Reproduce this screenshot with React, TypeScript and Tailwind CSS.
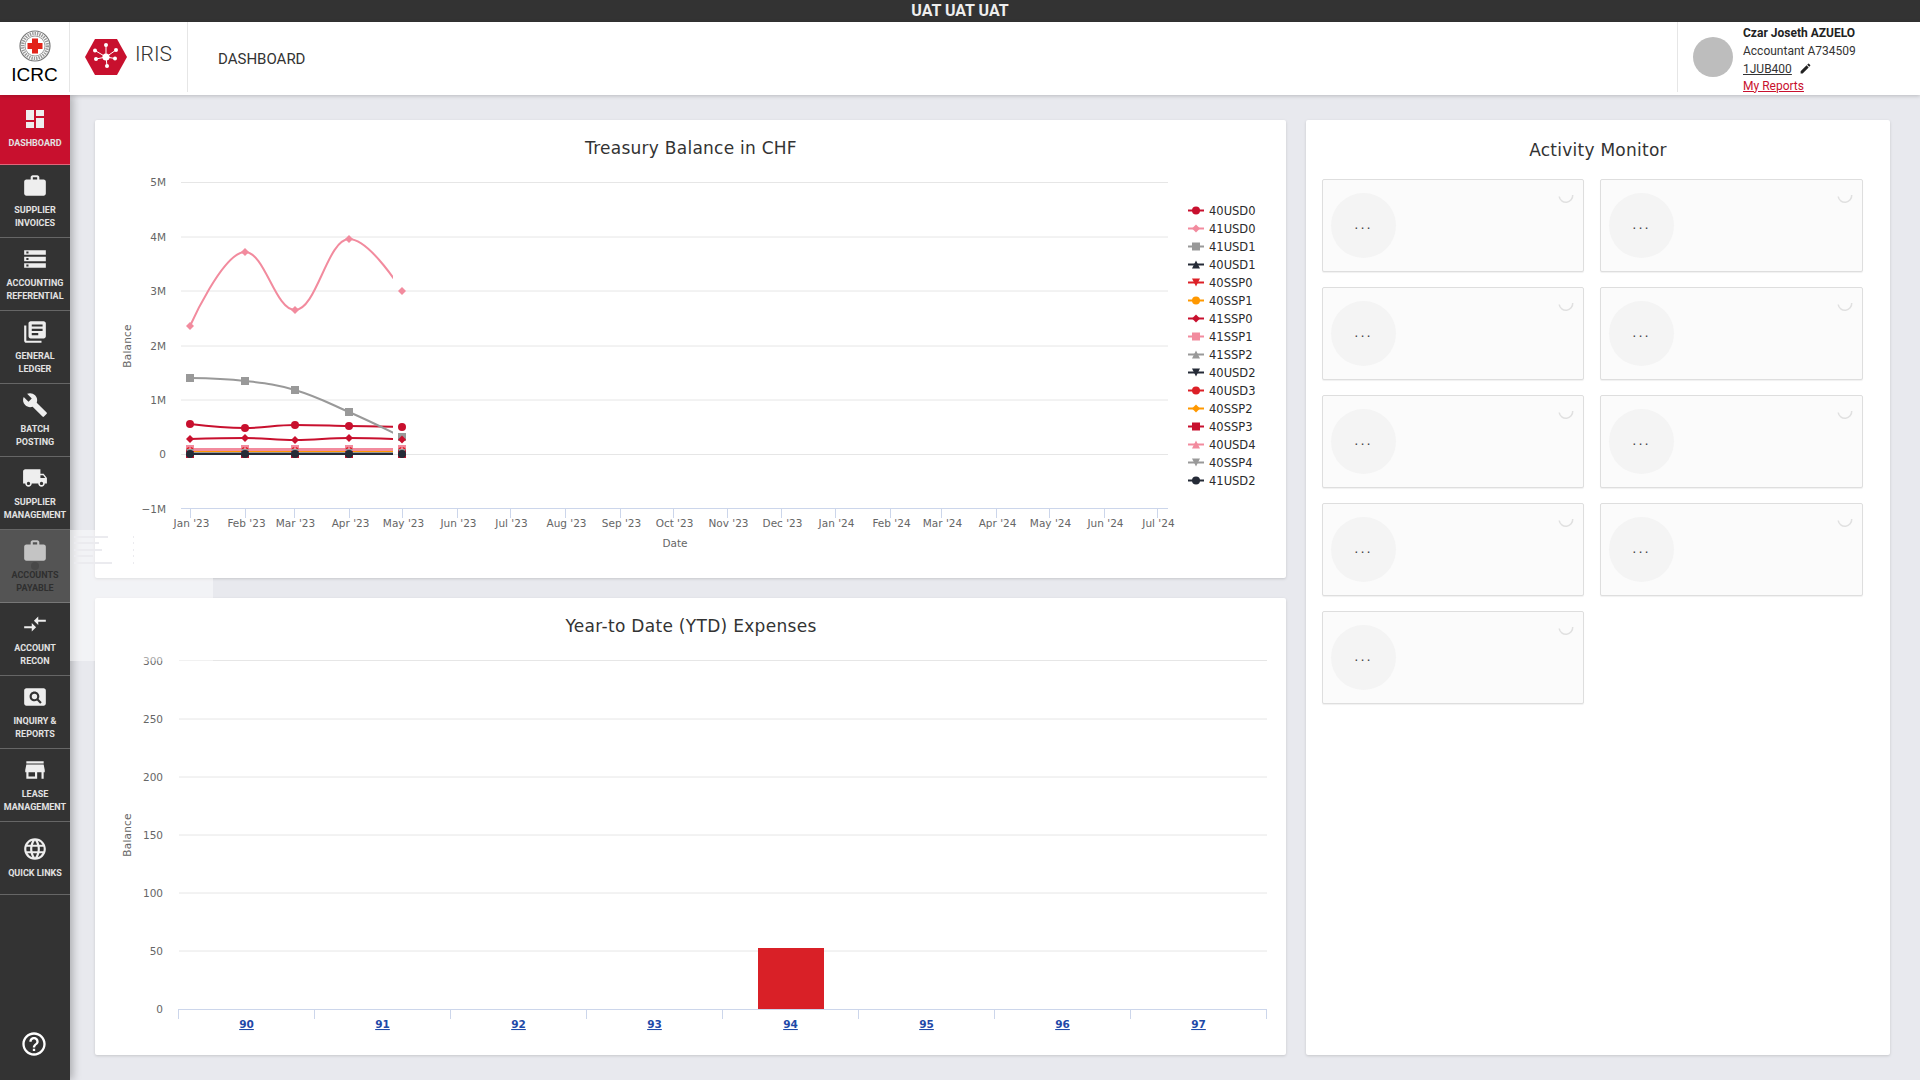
import {
  MdDashboard,
  MdWork,
  MdStorage,
  MdLibraryBooks,
  MdBuild,
  MdLocalShipping,
  MdCompareArrows,
  MdPageview,
  MdStore,
  MdLanguage,
  MdHelpOutline,
  MdEdit,
} from 'react-icons/md';
import type { IconType } from 'react-icons';

const CRIMSON = '#c8102e';
const PINK = '#f28b9e';
const GRAY = '#999999';
const DARK = '#252b37';
const RED = '#dc2027';
const ORANGE = '#ff9800';

const CHART_FONT = '"DejaVu Sans", sans-serif';

interface NavItem {
  label: string[];
  icon: IconType;
  active?: boolean;
  hover?: boolean;
  single?: boolean;
}

const navItems: NavItem[] = [
  { label: ['DASHBOARD'], icon: MdDashboard, active: true },
  { label: ['SUPPLIER', 'INVOICES'], icon: MdWork },
  { label: ['ACCOUNTING', 'REFERENTIAL'], icon: MdStorage },
  { label: ['GENERAL', 'LEDGER'], icon: MdLibraryBooks },
  { label: ['BATCH', 'POSTING'], icon: MdBuild },
  { label: ['SUPPLIER', 'MANAGEMENT'], icon: MdLocalShipping },
  { label: ['ACCOUNTS', 'PAYABLE'], icon: MdWork, hover: true },
  { label: ['ACCOUNT', 'RECON'], icon: MdCompareArrows },
  { label: ['INQUIRY &', 'REPORTS'], icon: MdPageview },
  { label: ['LEASE', 'MANAGEMENT'], icon: MdStore },
  { label: ['QUICK LINKS'], icon: MdLanguage, single: true },
];

type Marker = 'circle' | 'diamond' | 'square' | 'triangle' | 'triangle-down';

interface Series {
  name: string;
  color: string;
  marker: Marker;
  ys: number[];
}

const flat = (y: number) => [y, y, y, y, y];

const series: Series[] = [
  { name: '40USD0', color: CRIMSON, marker: 'circle', ys: [424, 428, 425, 426, 427] },
  { name: '41USD0', color: PINK, marker: 'diamond', ys: [326, 252, 310, 239, 291] },
  { name: '41USD1', color: GRAY, marker: 'square', ys: [378, 381, 390, 412, 437] },
  { name: '40USD1', color: DARK, marker: 'triangle', ys: flat(451) },
  { name: '40SSP0', color: RED, marker: 'triangle-down', ys: flat(450) },
  { name: '40SSP1', color: ORANGE, marker: 'circle', ys: flat(452) },
  { name: '41SSP0', color: CRIMSON, marker: 'diamond', ys: [439, 438, 440, 438, 439.5] },
  { name: '41SSP1', color: PINK, marker: 'square', ys: flat(449) },
  { name: '41SSP2', color: GRAY, marker: 'triangle', ys: flat(451) },
  { name: '40USD2', color: DARK, marker: 'triangle-down', ys: flat(453) },
  { name: '40USD3', color: RED, marker: 'circle', ys: flat(451) },
  { name: '40SSP2', color: ORANGE, marker: 'diamond', ys: flat(452) },
  { name: '40SSP3', color: CRIMSON, marker: 'square', ys: flat(454) },
  { name: '40USD4', color: PINK, marker: 'triangle', ys: flat(450) },
  { name: '40SSP4', color: GRAY, marker: 'triangle-down', ys: flat(453) },
  { name: '41USD2', color: DARK, marker: 'circle', ys: flat(454) },
];

const pointXs = [190, 245, 295, 349, 402];

const months: [string, number][] = [
  ["Jan '23", 0],
  ["Feb '23", 31],
  ["Mar '23", 59],
  ["Apr '23", 90],
  ["May '23", 120],
  ["Jun '23", 151],
  ["Jul '23", 181],
  ["Aug '23", 212],
  ["Sep '23", 243],
  ["Oct '23", 273],
  ["Nov '23", 304],
  ["Dec '23", 334],
  ["Jan '24", 365],
  ["Feb '24", 396],
  ["Mar '24", 425],
  ["Apr '24", 456],
  ["May '24", 486],
  ["Jun '24", 517],
  ["Jul '24", 547],
];

// same control point maths as a highcharts spline
function splinePath(xs: number[], ys: number[]) {
  const s = 1.5;
  const d = 2.5;
  const ctrl = xs.map((x, i) => {
    if (i === 0 || i === xs.length - 1) return null;
    const y = ys[i];
    const lx = (s * x + xs[i - 1]) / d;
    let ly = (s * y + ys[i - 1]) / d;
    const rx = (s * x + xs[i + 1]) / d;
    let ry = (s * y + ys[i + 1]) / d;
    const corr = ((ry - ly) * (rx - x)) / (rx - lx) + y - ry;
    ly += corr;
    ry += corr;
    if (ly > ys[i - 1] && ly > y) {
      ly = Math.max(ys[i - 1], y);
      ry = 2 * y - ly;
    } else if (ly < ys[i - 1] && ly < y) {
      ly = Math.min(ys[i - 1], y);
      ry = 2 * y - ly;
    }
    if (ry > ys[i + 1] && ry > y) {
      ry = Math.max(ys[i + 1], y);
      ly = 2 * y - ry;
    } else if (ry < ys[i + 1] && ry < y) {
      ry = Math.min(ys[i + 1], y);
      ly = 2 * y - ry;
    }
    return { lx, ly, rx, ry };
  });
  let path = `M ${xs[0]} ${ys[0]}`;
  for (let i = 1; i < xs.length; i++) {
    const a = ctrl[i - 1];
    const b = ctrl[i];
    const c1x = a ? a.rx : xs[i - 1];
    const c1y = a ? a.ry : ys[i - 1];
    const c2x = b ? b.lx : xs[i];
    const c2y = b ? b.ly : ys[i];
    path += ` C ${c1x} ${c1y} ${c2x} ${c2y} ${xs[i]} ${ys[i]}`;
  }
  return path;
}

function ChartMarker({ kind, x, y, color }: { kind: Marker; x: number; y: number; color: string }) {
  const r = 4;
  if (kind === 'circle') return <circle cx={x} cy={y} r={r} fill={color} />;
  if (kind === 'square') return <rect x={x - r} y={y - r} width={r * 2} height={r * 2} fill={color} />;
  if (kind === 'diamond') return <path d={`M ${x} ${y - r} L ${x + r} ${y} L ${x} ${y + r} L ${x - r} ${y} Z`} fill={color} />;
  if (kind === 'triangle') return <path d={`M ${x} ${y - r} L ${x + r} ${y + r} L ${x - r} ${y + r} Z`} fill={color} />;
  return <path d={`M ${x - r} ${y - r} L ${x + r} ${y - r} L ${x} ${y + r} Z`} fill={color} />;
}

// chart coordinates are page coordinates, the card starts at 95,120
function TreasuryChart() {
  const gridYs: [string, number][] = [
    ['5M', 182.5],
    ['4M', 237],
    ['3M', 291],
    ['2M', 346],
    ['1M', 400],
    ['0', 454.5],
  ];
  return (
    <svg className="block h-full w-full" viewBox="95 120 1191 458" style={{ fontFamily: CHART_FONT }}>
      <defs>
        <clipPath id="reveal">
          <rect x="181" y="150" width="212" height="340" />
        </clipPath>
      </defs>
      <text x="691" y="154" textAnchor="middle" fontSize="17" letterSpacing="0.25" fill="#333333">
        Treasury Balance in CHF
      </text>
      {gridYs.map(([label, y]) => (
        <g key={label}>
          <line x1="181" x2="1168" y1={y} y2={y} stroke="#e6e6e6" />
          <text x="166" y={y + 3.5} textAnchor="end" fontSize="10.5" fill="#666666">
            {label}
          </text>
        </g>
      ))}
      <text x="166" y="512.5" textAnchor="end" fontSize="10.5" fill="#666666">
        −1M
      </text>
      <line x1="181" x2="1168" y1="508.5" y2="508.5" stroke="#ccd6eb" />
      {months.map(([label, day]) => {
        const x = Math.round(190 + day * 1.768) + 0.5;
        return (
          <g key={label}>
            <line x1={x} x2={x} y1="508.5" y2="518" stroke="#ccd6eb" />
            <text x={x + 1} y="527" textAnchor="middle" fontSize="10.5" fill="#666666">
              {label}
            </text>
          </g>
        );
      })}
      <text x="675" y="547" textAnchor="middle" fontSize="10.5" fill="#666666">
        Date
      </text>
      <text transform="translate(131 346) rotate(-90)" textAnchor="middle" fontSize="10.5" letterSpacing="0.2" fill="#666666">
        Balance
      </text>
      {series.map((s) => (
        <g key={s.name}>
          <path d={splinePath(pointXs, s.ys)} fill="none" stroke={s.color} strokeWidth="2" clipPath="url(#reveal)" />
          {pointXs.map((x, i) => (
            <ChartMarker key={x} kind={s.marker} x={x} y={s.ys[i]} color={s.color} />
          ))}
        </g>
      ))}
      {series.map((s, i) => {
        const y = 210.5 + i * 18;
        return (
          <g key={s.name}>
            <line x1="1188" x2="1204" y1={y} y2={y} stroke={s.color} strokeWidth="2" />
            <ChartMarker kind={s.marker} x={1196} y={y} color={s.color} />
            <text x="1209" y={y + 4} fontSize="11.5" fill="#2b2b2b">
              {s.name}
            </text>
          </g>
        );
      })}
    </svg>
  );
}

function ExpensesChart() {
  const gridYs: [string, number][] = [
    ['300', 660.5],
    ['250', 719],
    ['200', 777],
    ['150', 835],
    ['100', 893],
    ['50', 951],
  ];
  const categories = ['90', '91', '92', '93', '94', '95', '96', '97'];
  return (
    <svg className="block h-full w-full" viewBox="95 598 1191 457" style={{ fontFamily: CHART_FONT }}>
      <text x="691" y="632" textAnchor="middle" fontSize="17" letterSpacing="0.3" fill="#333333">
        Year-to Date (YTD) Expenses
      </text>
      {gridYs.map(([label, y]) => (
        <g key={label}>
          <line x1="179" x2="1267" y1={y} y2={y} stroke="#e6e6e6" />
          <text x="163" y={y + 4} textAnchor="end" fontSize="10.5" fill="#666666">
            {label}
          </text>
        </g>
      ))}
      <text x="163" y="1013" textAnchor="end" fontSize="10.5" fill="#666666">
        0
      </text>
      <text transform="translate(131 835) rotate(-90)" textAnchor="middle" fontSize="10.5" letterSpacing="0.2" fill="#666666">
        Balance
      </text>
      <rect x="758" y="948" width="66" height="61" fill="#d92027" />
      <line x1="178" x2="1267" y1="1009.5" y2="1009.5" stroke="#ccd6eb" />
      {categories.map((label, i) => {
        const x = 178.5 + i * 136;
        return (
          <g key={label}>
            <line x1={x} x2={x} y1="1009.5" y2="1019" stroke="#ccd6eb" />
            <text x={x + 68} y="1028" textAnchor="middle" fontSize="10.5" fontWeight="600" fill="#1f4aa8" textDecoration="underline">
              {label}
            </text>
          </g>
        );
      })}
      <line x1="1266.5" x2="1266.5" y1="1009.5" y2="1019" stroke="#ccd6eb" />
    </svg>
  );
}

function IcrcLogo() {
  return (
    <svg width="32" height="32" viewBox="0 0 32 32">
      <circle cx="16" cy="16" r="15" fill="#ffffff" stroke="#777777" strokeWidth="1.2" />
      <circle cx="16" cy="16" r="12.4" fill="none" stroke="#999999" strokeWidth="3.4" strokeDasharray="1.4 1" />
      <circle cx="16" cy="16" r="10" fill="#ffffff" stroke="#777777" strokeWidth="0.7" />
      <path d="M13 8.5h6V13h4.500v6H19v4.500h-6V19H8.500v-6H13z" fill="#e2231a" />
    </svg>
  );
}

function IrisLogo() {
  const spokes = [
    [21, 6],
    [31, 11],
    [30, 19.5],
    [22, 27],
    [11, 20],
    [10, 11.5],
  ];
  return (
    <svg width="42" height="36" viewBox="0 0 42 36">
      <path d="M10 0h22l10 18-10 18H10L0 18z" fill="#c8102e" />
      {spokes.map(([x, y]) => (
        <g key={`${x}-${y}`}>
          <line x1="21" y1="18" x2={x} y2={y} stroke="#ffffff" strokeWidth="1" />
          <circle cx={x} cy={y} r="2" fill="#ffffff" />
        </g>
      ))}
      <circle cx="21" cy="18" r="3.6" fill="#ffffff" />
    </svg>
  );
}

function SidebarItem({ item }: { item: NavItem }) {
  const Icon = item.icon;
  const bg = item.active ? 'h-[70px] bg-[#c8102e] border-[#e0667a]' : item.hover ? 'h-[73px] bg-[#545454] border-[#777777]' : 'h-[73px] border-[#666666]';
  const fg = item.hover ? 'text-[#2f2f2f]' : 'text-[#e2e2e2]';
  const iconTop = item.active ? 'mt-[12px]' : item.single ? 'mt-[14px]' : 'mt-[8px]';
  return (
    <div className={`flex flex-col items-center border-b ${bg}`}>
      <Icon className={`${iconTop} ${item.hover ? 'text-[#c4c4c4]' : 'text-[#eeeeee]'}`} size={item.active ? 24 : 26} />
      <div className={`${item.active ? 'mt-[6px]' : 'mt-[5px]'} text-center text-[9px] leading-[13px] font-bold ${fg}`}>
        {item.label.map((line) => (
          <div key={line} className="whitespace-nowrap">
            {line}
          </div>
        ))}
      </div>
    </div>
  );
}

function ActivityCard() {
  return (
    <div className="relative flex h-[93px] items-center rounded-[2px] border border-[#dedede] bg-[#fbfbfb] pl-[8px] shadow-[0_1px_1px_rgba(0,0,0,0.06)]">
      <div className="flex h-[65px] w-[65px] items-center justify-center rounded-full bg-[#f4f4f4] pb-[3px] font-['DejaVu_Sans',sans-serif] text-[13px] leading-none tracking-[2px] text-[#444444]">
        ...
      </div>
      <svg className="absolute top-[10px] right-[9px]" width="16" height="16" viewBox="0 0 16 16">
        <path d="M1.200 6.500a6.800 6.800 0 0 0 13.500 -1.500" fill="none" stroke="#e0e0e0" strokeWidth="1.500" />
      </svg>
    </div>
  );
}

export default function App() {
  return (
    <div className="relative flex h-[1080px] w-[1920px] flex-col overflow-hidden bg-[#e8e9ee] font-['Roboto',sans-serif]">
      <div className="h-[22px] bg-[#333333] text-center text-[16px] leading-[21px] font-bold text-[#eeeeee]">UAT UAT UAT</div>

      <header className="relative z-10 flex h-[73px] items-stretch bg-white shadow-[0_1px_4px_rgba(0,0,0,0.2)]">
        <div className="flex h-[70px] w-[70px] flex-col items-center border-r border-[#e6e6e6] pt-[8px]">
          <IcrcLogo />
          <div className="mt-[2px] font-['Liberation_Sans',sans-serif] text-[19px] leading-[22px] text-black">ICRC</div>
        </div>
        <div className="flex h-[70px] w-[118px] items-start border-r border-[#e6e6e6] pt-[17px] pl-[15px]">
          <IrisLogo />
          <span className="ml-[8px] text-[21px] leading-[30px] font-light text-[#333333]">IRIS</span>
        </div>
        <div className="ml-[30px] pt-[27px] text-[15px] leading-[20px] text-[#333333]">DASHBOARD</div>
        <div className="ml-auto flex h-[70px] w-[243px] items-start border-l border-[#e6e6e6] pl-[15px]">
          <div className="mt-[15px] h-[40px] w-[40px] rounded-full bg-[#bdbdbd]" />
          <div className="ml-[10px] pt-[3px] text-[12px] leading-[17.5px] text-[#333333]">
            <div className="font-bold text-[#222222]">Czar Joseth AZUELO</div>
            <div>Accountant A734509</div>
            <div className="mt-[1px] flex items-center gap-[7px]">
              <span className="underline">1JUB400</span>
              <MdEdit size={13} className="mb-[3px] text-[#222222]" />
            </div>
            <div className="leading-[14px] text-[#c8102e] underline">My Reports</div>
          </div>
        </div>
      </header>

      <div className="flex min-h-0 flex-1">
        <aside className="flex w-[70px] flex-col bg-[#333333] shadow-[3px_0_8px_rgba(0,0,0,0.25)]">
          {navItems.map((item) => (
            <SidebarItem key={item.label.join(' ')} item={item} />
          ))}
          <div className="mt-auto flex justify-center pr-[2px] pb-[22px]">
            <MdHelpOutline size={28} className="text-white" />
          </div>
        </aside>

        <main className="flex min-w-0 flex-1 gap-[20px] pt-[25px] pl-[25px]">
          <div className="flex w-[1191px] flex-col gap-[20px]">
            <section className="h-[458px] rounded-[2px] bg-white shadow-[0_1px_3px_rgba(0,0,0,0.15)]">
              <TreasuryChart />
            </section>
            <section className="h-[457px] rounded-[2px] bg-white shadow-[0_1px_3px_rgba(0,0,0,0.15)]">
              <ExpensesChart />
            </section>
          </div>
          <section className="h-[935px] w-[584px] rounded-[2px] bg-white px-[16px] shadow-[0_1px_3px_rgba(0,0,0,0.15)]">
            <h2 className="pt-[18px] text-center font-['DejaVu_Sans',sans-serif] text-[17px] leading-[25px] tracking-[0.25px] text-[#333333]">Activity Monitor</h2>
            <div className="mt-[16px] grid w-[541px] grid-cols-[262px_263px] gap-x-[16px] gap-y-[15px]">
              {Array.from({ length: 9 }, (_, i) => (
                <ActivityCard key={i} />
              ))}
            </div>
          </section>
        </main>
      </div>

      {/* ripple left on the hovered menu entry */}
      <div className="absolute top-[562px] left-[31px] z-20 h-[8px] w-[8px] rounded-full bg-[#484848]" />

      {/* menu caught mid fade, lies over sidebar edge and charts */}
      <div className="absolute top-[530px] left-[70px] z-20 h-[131px] w-[143px] bg-white/45 pt-[1px] pl-[4px]">
        {[34, 25, 28, 19, 38].map((w, i) => (
          <div key={i} className="mt-[4.6px] flex h-[2px] w-[60px] items-center justify-between">
            <span className="h-[2px] bg-[#ebebef]" style={{ width: w }} />
            <span className="h-[2px] w-[1px] bg-[#ebebef]" />
          </div>
        ))}
      </div>
    </div>
  );
}
